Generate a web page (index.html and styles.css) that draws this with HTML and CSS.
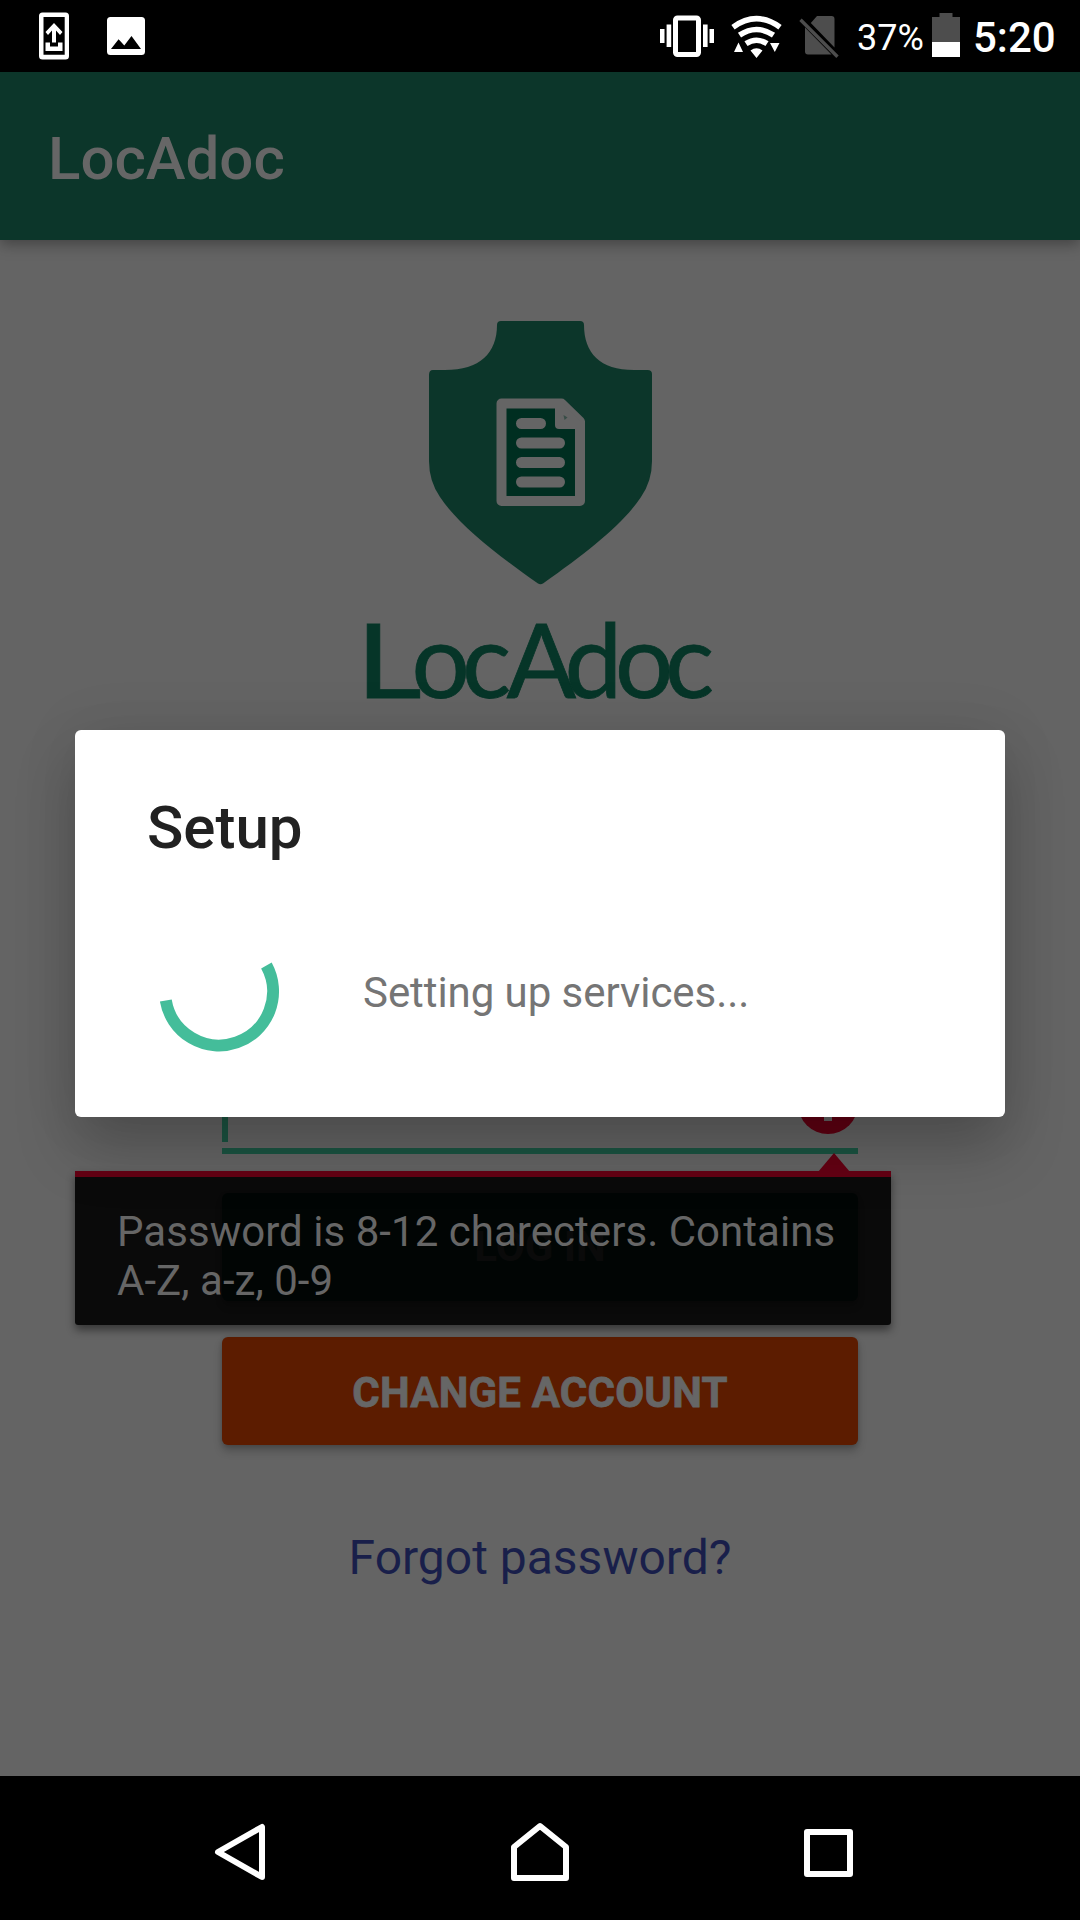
FILE: index.html
```html
<!DOCTYPE html>
<html lang="en">
<head>
<meta charset="utf-8">
<title>LocAdoc</title>
<link rel="stylesheet" href="styles.css">
</head>
<body>
<div class="screen">
  <header class="status">
    <svg class="status-left" width="160" height="72" viewBox="0 0 160 72">
      <path fill="#fff" fill-rule="evenodd" d="M42.500 12.500h23q3.500 0 3.500 3.500v40q0 3.500-3.500 3.500h-23q-3.500 0-3.500-3.500v-40q0-3.500 3.500-3.500zM43.500 17v37.700h21.200v-37.700z"/>
      <path fill="#fff" d="M54 23l8.500 9-2.500 3-4-4.500v12h-4v-12l-4 4.500-2.500-3zM45.500 42.500h4.500v4h8v-4h4.500v8.500h-17z"/>
      <path fill="#fff" fill-rule="evenodd" d="M110.500 17h31q3.500 0 3.500 3.500v31q0 3.500-3.500 3.500h-31q-3.500 0-3.500-3.500v-31q0-3.500 3.500-3.500zM111 49h30l-9.500-13-7.200 9.500-5.700-6.200z"/>
    </svg>
    <div class="status-right">
      <svg width="200" height="72" viewBox="650 0 200 72">
        <rect x="675.500" y="18" width="23" height="36.500" rx="2" fill="none" stroke="#fff" stroke-width="5"/>
        <path fill="#fff" d="M660 29h4.500v14h-4.500zM666.600 24.500h4.600v22.500h-4.600zM703 24.500h4.600v22.500h-4.600zM709.500 29h4.500v14h-4.500z"/>
        <g fill="none" stroke="#fff" stroke-width="5.600">
          <path d="M733 27.200Q756.500 10.200 780 27.200"/>
          <path d="M739.500 35.200Q756.500 23.800 773.500 35.200"/>
          <path d="M746 43.700Q756.500 36.800 767 43.700"/>
        </g>
        <path fill="#fff" d="M750.500 50.500q6-4.500 12 0l-6 7.500zM734 52l4.500-9.500 4.500 9.500zM770 43h9.500l-4.700 9z"/>
        <path fill="#4d4d4d" d="M817 16h14.500q3 0 3 3v28.500l-23.700-24.500zM805 27.500l26.500 27h-23.500q-3 0-3-3zM799.300 21l2.400-2.600 37 37-2.400 2.600z"/>
      </svg>
      <span class="percent">37%</span>
      <svg class="battery" width="28" height="72" viewBox="0 0 28 72">
        <path fill="#4d4d4d" d="M7.500 13h13v4h7.500v25h-28v-25h7.500z"/>
        <path fill="#fff" d="M0 42h28v15h-28z"/>
      </svg>
      <time class="clock">5:20</time>
    </div>
  </header>

  <main class="content">
    <div class="appbar"><h1>LocAdoc</h1></div>
    <section class="login">
      <svg class="logo" width="380" height="410" viewBox="350 300 380 410">
        <path fill="#0c362a" d="M501 321h79q4 0 4 4c0 28 16 45 50 45h13.500q4.500 0 4.500 4v87q0 20-11 36C623 524 589 551 543 583.500q-2.500 1.500-5 0C492 551 458 524 440 497Q429 481 429 461v-86q0-5 4-5h12c35 0 52-17 52-45q0-4 4-4z"/>
        <path fill="#002e21" stroke="#656565" stroke-width="10" stroke-linejoin="round" d="M501.500 403.500h60l18.500 18v79.500h-78.500z"/>
        <path fill="#656565" d="M555 404h8l17 17v8h-21q-4 0-4-4z"/>
        <path stroke="#656565" stroke-width="11" stroke-linecap="round" d="M521.500 423.500h19M521.500 443h38M521.500 462.500h38M521.500 482h38"/>
        <path fill="#0c362a" fill-opacity=".5" d="M563.500 415l4 2.500-3 2.500z"/>
        <text class="wordmark" transform="translate(355.500 698) scale(1.25 1)">L</text>
        <text class="wordmark" y="698" x="411.500 462 506.500 564.500 615 665">ocAdoc</text>
      </svg>
      <div class="field">
        <i class="caret"></i>
        <svg class="error" width="60" height="60" viewBox="0 0 60 60"><circle cx="30" cy="30" r="30" fill="#600012"/><path fill="#656565" d="M26 15h8v18h-8zM26 39h8v8h-8z"/></svg>
      </div>
      <button class="btn login-btn">LOG IN</button>
      <button class="btn change-btn">CHANGE ACCOUNT</button>
      <a class="forgot">Forgot password?</a>
    </section>

    <div class="hint">
      <svg class="hint-arrow" width="32" height="19" viewBox="0 0 32 19"><path fill="#640013" d="M0 19l16-19 16 19z"/></svg>
      <p>Password is 8-12 charecters. Contains<br>A-Z, a-z, 0-9</p>
    </div>

    <div class="dialog" role="dialog">
      <h2>Setup</h2>
      <div class="progress">
        <svg width="144" height="144" viewBox="0.500 0 144 144"><path fill="none" stroke="#44bd9a" stroke-width="12" d="M119.900 46.500A54 54 0 1 1 19.300 81.500"/></svg>
        <span>Setting up services...</span>
      </div>
    </div>
  </main>

  <nav class="navbar">
    <svg width="64" height="72" viewBox="1 1 64 72"><path d="M55 11v50L11 36z"/></svg>
    <svg width="64" height="72" viewBox="0 1 64 72"><path d="M6 31L32 10l26 21v31H6z"/></svg>
    <svg width="64" height="72" viewBox="0 1 64 72"><path d="M11 16h43v42H11z"/></svg>
  </nav>
</div>
</body>
</html>
```
FILE: styles.css
```css
* { box-sizing: border-box; }
body { margin: 0; font-family: Roboto, sans-serif; background: #000; }
svg { display: block; flex: none; }
h1, h2, p { margin: 0; }

.screen { display: flex; flex-direction: column; width: 1080px; height: 1920px; overflow: hidden; }

.status { display: flex; justify-content: space-between; height: 72px; flex: none; background: #000; color: #fff; position: relative; }
.status-right { display: flex; width: 430px; line-height: 72px; }
.percent { width: 74px; padding-left: 7px; font-size: 36px; padding-top: 2px; }
.battery { margin-left: 8px; }
.clock { padding-left: 13px; font-size: 42px; font-weight: 500; padding-top: 2px; }

.content { position: relative; flex: 1; background: #646464; overflow: hidden; }
.appbar { position: relative; height: 168px; padding: 5px 48px 0; background: #0c362a; box-shadow: 0 4px 14px rgba(0, 0, 0, .35); }
.appbar h1 { color: #666; font-size: 60px; font-weight: 500; line-height: 163px; }

.login { display: flex; flex-direction: column; align-items: center; padding-top: 60px; }
.logo { overflow: visible; }
.wordmark { font-family: Lato, sans-serif; font-size: 103px; fill: #063528; stroke: #063528; stroke-width: .8px; }
.field { position: relative; width: 636px; height: 144px; margin-top: 300px; border-bottom: 6px solid #1b5442; }
.logo + .field { margin-top: 300px; }
.caret { position: absolute; left: 0; bottom: 6px; width: 6px; height: 60px; background: #1b5442; }
.error { position: absolute; right: 0; bottom: 14px; }
.btn { width: 636px; height: 108px; padding: 0; border: 0; border-radius: 6px; color: #666; font: 700 42px/108px Roboto, sans-serif; box-shadow: 0 6px 8px rgba(0, 0, 0, .22), 0 1px 4px rgba(0, 0, 0, .15); }
.login-btn { margin-top: 39px; background: #0c362a; }
.change-btn { margin-top: 36px; background: #5c1c00; padding-top: 2px; letter-spacing: .2px; -webkit-text-stroke: .8px #666; }
.forgot { margin-top: 85px; color: #191f4a; font-size: 48px; line-height: 56px; }

.hint { position: absolute; left: 75px; top: 1099px; width: 816px; height: 154px; padding: 30px 39px 30px 42px; border-top: 6px solid #640013; border-radius: 0 0 3px 3px; background: rgba(0, 0, 0, .9); background-clip: padding-box; box-shadow: 0 5px 9px rgba(0, 0, 0, .45); color: #666; font-size: 42px; line-height: 49px; letter-spacing: .04px; white-space: nowrap; }
.hint-arrow { position: absolute; right: 41px; top: -24px; }

.dialog { position: absolute; left: 75px; top: 658px; width: 930px; height: 387px; padding: 62px 72px; border-radius: 6px; background: #fff; box-shadow: 0 32px 60px rgba(0, 0, 0, .21), 0 0 60px rgba(0, 0, 0, .08); }
.dialog h2 { color: #212121; font-size: 60px; font-weight: 500; line-height: 71px; }
.progress { display: flex; align-items: center; gap: 72px; margin-top: 56px; color: #757575; font-size: 42px; letter-spacing: -.06px; }
.progress span { padding-top: 3px; }

.navbar { display: flex; justify-content: space-between; align-items: center; height: 144px; flex: none; padding: 10px 220px 0 208px; background: #000; }
.navbar svg { fill: none; stroke: #fff; stroke-width: 6; stroke-linejoin: round; }
.navbar svg:nth-child(2) { margin-left: 12px; }
```
